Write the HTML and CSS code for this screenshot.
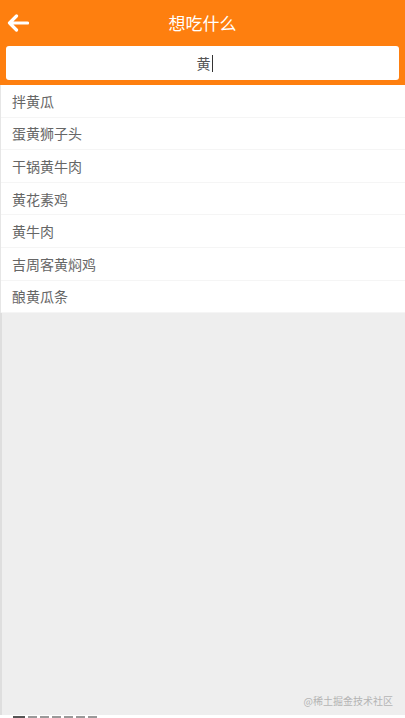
FILE: index.html
```html
<!DOCTYPE html>
<html lang="zh">
<head>
<meta charset="utf-8">
<link rel="stylesheet" href="styles.css">
</head>
<body>
<div class="page">
  <header class="topbar">
    <div class="back">
      <svg width="22" height="18" viewBox="0 0 22 18">
        <path d="M9.5 2 L2.5 9 L9.5 16 M2.5 9 H20.5" fill="none" stroke="#fff" stroke-width="3.2" stroke-linecap="round" stroke-linejoin="round"/>
      </svg>
    </div>
    <h1 class="title">想吃什么</h1>
  </header>
  <div class="searchbar">
    <div class="input"><span class="val">黄</span><span class="caret"></span></div>
  </div>
  <ul class="list">
    <li>拌黄瓜</li>
    <li>蛋黄狮子头</li>
    <li>干锅黄牛肉</li>
    <li>黄花素鸡</li>
    <li>黄牛肉</li>
    <li>吉周客黄焖鸡</li>
    <li>酿黄瓜条</li>
  </ul>
  <div class="empty">
    <span class="mark">@稀土掘金技术社区</span>
  </div>
  <div class="peek">
    <span class="blk wide"></span>
    <span class="blk"></span><span class="blk"></span><span class="blk"></span>
    <span class="blk"></span><span class="blk"></span><span class="blk"></span>
  </div>
</div>
</body>
</html>
```
FILE: styles.css
```css
* { box-sizing: border-box; }
html, body { margin: 0; padding: 0; }
body {
  width: 405px;
  height: 718px;
  overflow: hidden;
  font-family: "Noto Sans CJK SC", "Noto Sans", sans-serif;
  background: #fff;
}
.page {
  display: flex;
  flex-direction: column;
  height: 718px;
}
.topbar {
  height: 46px;
  background: #fe7f0f;
  display: flex;
  align-items: center;
  justify-content: center;
  position: relative;
}
.back {
  position: absolute;
  left: 7px;
  top: 14px;
  width: 22px;
  height: 18px;
  display: flex;
}
.title {
  margin: 0;
  font-size: 17px;
  font-weight: 400;
  color: #fff;
  line-height: 20px;
}
.searchbar {
  background: #fe7f0f;
  padding: 0 6px 5px;
  height: 39px;
}
.input {
  background: #fff;
  border-radius: 3px;
  height: 34px;
  display: flex;
  align-items: center;
  justify-content: center;
  font-size: 14px;
  color: #555;
}
.val { margin-left: 4px; }
.caret {
  display: inline-block;
  width: 1px;
  height: 17px;
  background: #333;
  margin-left: 1px;
}
.list {
  list-style: none;
  margin: 0;
  padding: 0;
  border-left: 1px solid #e6e6e6;
  background: #fff;
}
.list li {
  height: 32.6px;
  padding: 0 12px 0 11px;
  display: flex;
  align-items: center;
  font-size: 14px;
  color: #666;
  border-bottom: 1px solid #f5f5f5;
}
.empty {
  flex: 1;
  background: #eeeeee;
  border-left: 2px solid #dedede;
  display: flex;
  align-items: flex-end;
  justify-content: flex-end;
  padding: 0 12px 8px 0;
}
.mark {
  font-size: 10px;
  color: #b4b4b4;
  line-height: 12px;
}
.peek {
  height: 3px;
  overflow: hidden;
  background: #fff;
  padding: 1px 0 0 13px;
  display: flex;
  gap: 3px;
}
.blk {
  width: 9px;
  height: 2px;
  background: #999;
}
.blk.wide {
  width: 12px;
  background: #555;
}
```
